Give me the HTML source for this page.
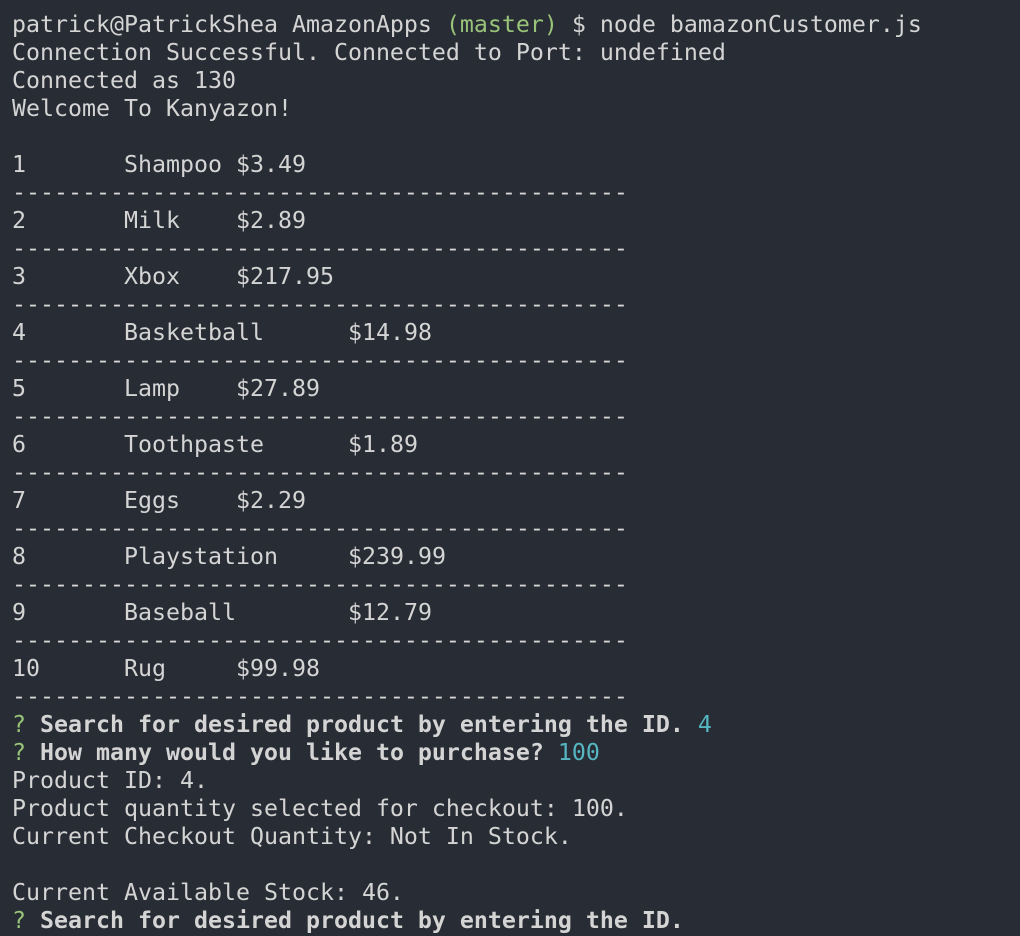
<!DOCTYPE html>
<html><head><meta charset="utf-8"><style>
html,body{margin:0;padding:0;background:#282c34;width:1020px;height:936px;overflow:hidden}
pre{margin:0;position:absolute;left:12px;top:-17px;font-family:"DejaVu Sans Mono","Liberation Mono",monospace;font-size:23.25px;line-height:28px;color:#d4d4d4;tab-size:8;-moz-tab-size:8;white-space:pre}
.g{color:#98c379}.c{color:#56b6c2}b{font-weight:bold}
</style></head><body><pre>  ~
patrick@PatrickShea AmazonApps <span class="g">(master)</span> $ node bamazonCustomer.js
Connection Successful. Connected to Port: undefined
Connected as 130
Welcome To Kanyazon!

1	Shampoo	$3.49
--------------------------------------------
2	Milk	$2.89
--------------------------------------------
3	Xbox	$217.95
--------------------------------------------
4	Basketball	$14.98
--------------------------------------------
5	Lamp	$27.89
--------------------------------------------
6	Toothpaste	$1.89
--------------------------------------------
7	Eggs	$2.29
--------------------------------------------
8	Playstation	$239.99
--------------------------------------------
9	Baseball	$12.79
--------------------------------------------
10	Rug	$99.98
--------------------------------------------
<span class="g">?</span> <b>Search for desired product by entering the ID.</b> <span class="c">4</span>
<span class="g">?</span> <b>How many would you like to purchase?</b> <span class="c">100</span>
Product ID: 4.
Product quantity selected for checkout: 100.
Current Checkout Quantity: Not In Stock.

Current Available Stock: 46.
<span class="g">?</span> <b>Search for desired product by entering the ID.</b>
</pre></body></html>
